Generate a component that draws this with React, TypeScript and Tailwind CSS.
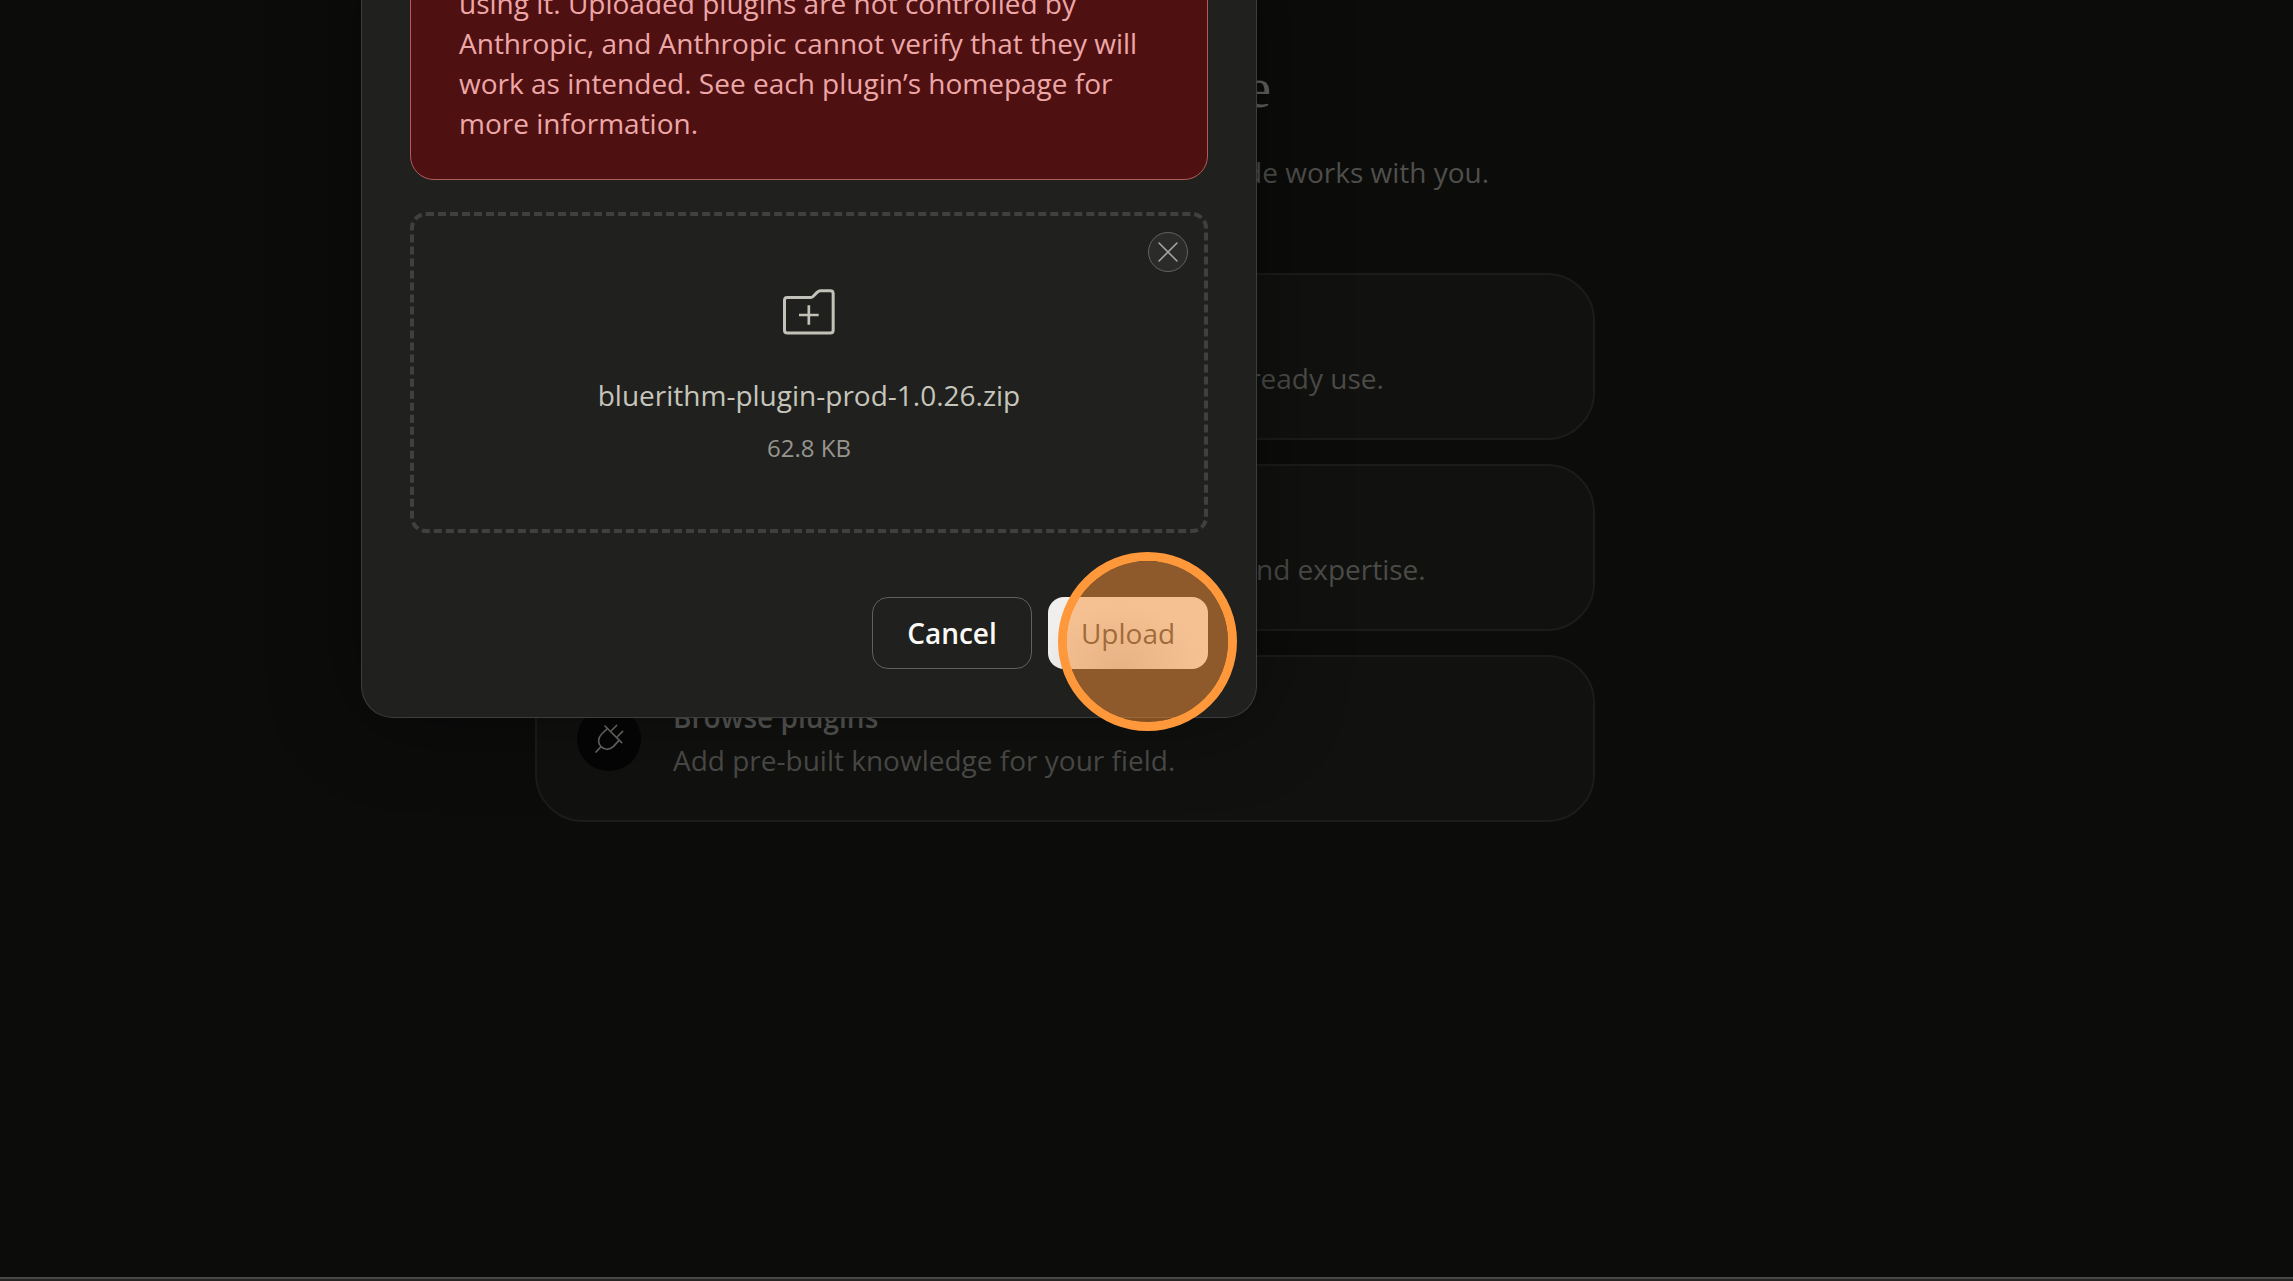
type CardProps = { title: string; description: string };

const cards: CardProps[] = [
  {
    title: "Connect your apps",
    description: "Let Claude read and write to the tools you already use.",
  },
  {
    title: "Create new skills",
    description: "Teach Claude your processes, team norms, and expertise.",
  },
  {
    title: "Browse plugins",
    description: "Add pre-built knowledge for your field.",
  },
];

function PlugIcon() {
  return (
    <svg
      className="size-[29px]"
      viewBox="105 73 87 87"
      fill="none"
      stroke="currentColor"
      strokeWidth="5"
      strokeLinecap="round"
      strokeLinejoin="round"
      aria-hidden="true"
    >
      <path d="M135 79 L185 129" />
      <path d="M153 94 L170 77" />
      <path d="M171 112 L188 95" />
      <path d="M142 87 L125 103 C112 116 114 132 123 141 C133 151 148 152 160 141 L177 122" />
      <path d="M122 142 L108 157" />
    </svg>
  );
}

function FolderPlusIcon() {
  return (
    <svg
      className="h-[46px] w-[52px]"
      viewBox="130 88 156 137"
      fill="none"
      stroke="currentColor"
      strokeWidth="9"
      strokeLinejoin="round"
      aria-hidden="true"
    >
      <path d="M143 113 H213 Q217 113 220 110 L233 97 Q237 92.5 243 92.5 H272 Q280.5 92.5 280.5 101 V211 Q280.5 219.5 272 219.5 H143 Q134.5 219.5 134.5 211 V121.5 Q134.5 113 143 113 Z" />
      <path d="M178 165.5 H237 M207.5 136 V195" strokeWidth="8" />
    </svg>
  );
}

function CloseIcon() {
  return (
    <svg
      className="size-5"
      viewBox="0 0 20 20"
      fill="none"
      stroke="currentColor"
      strokeWidth="1.6"
      strokeLinecap="round"
      aria-hidden="true"
    >
      <path d="M1 1 L19 19 M19 1 L1 19" />
    </svg>
  );
}

function OptionCard({ title, description }: CardProps) {
  return (
    <button
      type="button"
      className="flex w-full items-center gap-8 rounded-[48px] border-2 border-[#1c1c1b] bg-[#11110f] px-10 py-10 text-left"
    >
      <span className="flex size-16 shrink-0 items-center justify-center rounded-full bg-[#050505] text-[#6a6a67]">
        <PlugIcon />
      </span>
      <span className="flex flex-col gap-[3px]">
        <span className="font-semibold text-[#585856]">{title}</span>
        <span className="text-[#4b4b48]">{description}</span>
      </span>
    </button>
  );
}

function UploadDialog() {
  return (
    <div className="absolute inset-0 flex items-start justify-center overflow-hidden pr-[675px]">
      <div
        role="dialog"
        aria-modal="true"
        aria-label="Upload plugin"
        className="-mt-[54px] w-full max-w-[896px] rounded-b-[32px] border border-t-0 border-[#3d3d3b] bg-[#20201e] px-12 pb-12 shadow-[0_0_88px_rgba(2,2,6,0.4)]"
      >
        <p
          role="alert"
          className="rounded-3xl border border-[#b05c5a] bg-[#4f1012] px-12 py-9 text-[#eda7a7]"
        >
          using it. Uploaded plugins are not controlled by Anthropic, and
          Anthropic cannot verify that they will work as intended. See each
          plugin’s homepage for more information.
        </p>

        <div className="relative mt-8 flex flex-col items-center rounded-2xl border-4 border-dashed border-[#40403e] pt-[73px] pb-16">
          <button
            type="button"
            aria-label="Remove file"
            className="absolute top-4 right-4 flex size-10 items-center justify-center rounded-full border border-[#62625f] bg-[#2b2b29] text-[#a5a4a0]"
          >
            <CloseIcon />
          </button>
          <span className="text-[#c3c2b9]">
            <FolderPlusIcon />
          </span>
          <p className="mt-10 text-[#c6c5bc]">
            bluerithm-plugin-prod-1.0.26.zip
          </p>
          <p className="mt-4 text-2xl leading-[34px] text-[#96958e]">62.8 KB</p>
        </div>

        <div className="mt-16 flex justify-end gap-4">
          <button
            type="button"
            className="h-[72px] w-40 rounded-2xl border border-[#5f5f5d] font-semibold text-[#faf9f5]"
          >
            Cancel
          </button>
          <div className="relative">
            <button
              type="button"
              className="h-[72px] w-40 rounded-2xl bg-[radial-gradient(ellipse_at_45%_100%,#d4d2d0_0%,#f0efed_65%)] text-[#454240]"
            >
              Upload
            </button>
            <span
              aria-hidden="true"
              className="pointer-events-none absolute -top-[45px] left-[10px] size-[179px] rounded-full border-[9px] border-[#ff983a] bg-[#fb9438]/50 bg-clip-padding"
            />
          </div>
        </div>
      </div>
    </div>
  );
}

export default function App() {
  return (
    <div className="relative flex min-h-screen flex-col bg-[#0c0c0b] font-['Open_Sans',sans-serif] text-[28px] leading-10">
      <main className="flex flex-1 flex-col items-center pt-[52px] pr-[163px]">
        <h1 className="font-['Liberation_Serif',serif] text-[56px] leading-[72px] text-[#646361]">
          Customize Claude
        </h1>
        <p className="mt-7 text-[#4f4f4c]">
          Skills, connectors, and plugins shape how Claude works with you.
        </p>
        <div className="mt-[81px] flex w-full max-w-[1060px] flex-col gap-6">
          {cards.map((card) => (
            <OptionCard key={card.title} {...card} />
          ))}
        </div>
      </main>
      <footer className="h-1 border-t-2 border-[#4a4845] bg-[#262422]" />
      <UploadDialog />
    </div>
  );
}
